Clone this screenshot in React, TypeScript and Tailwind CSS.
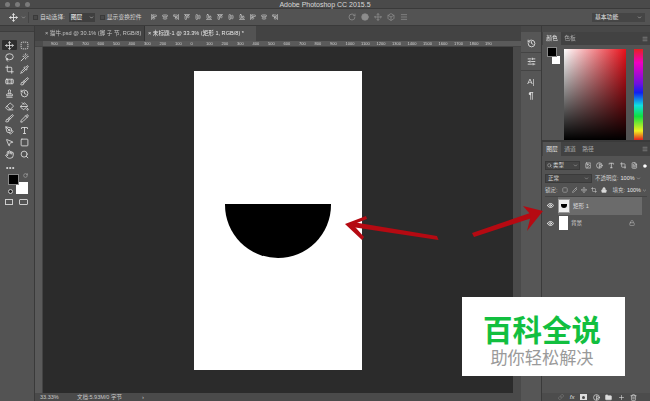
import {
  AlignCenterHorizontal,
  AlignCenterVertical,
  AlignEndHorizontal,
  AlignEndVertical,
  AlignStartHorizontal,
  AlignStartVertical,
  Box,
  Brush,
  ChevronDown,
  Crop,
  Eraser,
  Eye,
  FileText,
  Folder,
  Hand,
  History,
  Image as ImageIcon,
  Link,
  Lasso,
  Lock,
  Menu,
  Move,
  PaintBucket,
  PenTool,
  Pencil,
  Pipette,
  RotateCw,
  Search,
  Square,
  SquareDashed,
  Stamp,
  Trash2,
  Type,
  Wand,
  Bandage,
  MousePointer2,
  SlidersHorizontal,
  Circle,
  Contrast,
  Plus,
} from 'lucide-react';

const font = 'font-["Liberation_Sans","Noto_Sans_CJK_SC",sans-serif]';

const tools = [
  [Move, SquareDashed],
  [Lasso, Wand],
  [Crop, Pipette],
  [Bandage, Brush],
  [Stamp, History],
  [Eraser, PaintBucket],
  [Brush, Pencil],
  [PenTool, Type],
  [MousePointer2, Square],
  [Hand, Search],
];

const aligns = [
  AlignStartVertical,
  AlignCenterVertical,
  AlignEndVertical,
  AlignStartHorizontal,
  AlignCenterHorizontal,
  AlignEndHorizontal,
  AlignStartHorizontal,
  AlignCenterHorizontal,
  AlignEndHorizontal,
  AlignStartVertical,
  AlignCenterVertical,
  AlignEndVertical,
];

const rulerMarks = ['900', '800', '700', '600', '500', '400', '300', '200', '100', '0', '100', '200', '300', '400', '500', '600', '700', '800', '900', '1000', '1100', '1200', '1300', '1400', '1500', '1600', '1700', '1800', '190'];

function ToolBar() {
  return (
    <div className="w-[35px] shrink-0 bg-[#535353] border-r border-[#3a3a3a] flex flex-col">
      <div className="h-[6px] bg-[#484848] border-b border-[#3d3d3d]" />
      <div className="h-[8px]" />
      <div className="flex flex-col gap-[2px] px-[2px]">
        {tools.map((row, i) => (
          <div key={i} className="flex h-[10.2px] gap-[1px]">
            {row.map((Icon, j) => (
              <div
                key={j}
                className={`w-[15px] flex items-center justify-center ${i === 0 && j === 0 ? 'bg-[#2e2e2e] rounded-[1px]' : ''}`}
              >
                <Icon size={9} strokeWidth={2.2} className="text-[#e2e2e2]" />
              </div>
            ))}
          </div>
        ))}
      </div>
      <div className="mt-[5px] ml-[6px] text-[#d5d5d5] text-[7px] leading-[6px] font-bold tracking-[0.5px]">•••</div>
      <div className="relative mt-[3px] ml-[8px] w-[20px] h-[20px]">
        <div className="absolute right-0 bottom-0 w-[12px] h-[12px] bg-white" />
        <div className="absolute left-0 top-0 w-[11px] h-[11px] bg-black border border-[#888]" />
        <RotateCw size={5} className="absolute right-0 -top-[1px] text-[#ccc]" />
        <div className="absolute left-0 bottom-0 w-[5px] h-[5px] bg-[#222] border border-[#ccc] rounded-full" />
      </div>
      <div className="mt-[5px] ml-[5px] flex gap-[6px]">
        <div className="w-[8px] h-[6px] border border-[#ccc]" />
        <div className="w-[9px] h-[6px] border border-[#ccc] rounded-[1px]" />
      </div>
    </div>
  );
}

function Tabs() {
  return (
    <div className="h-[15px] flex bg-[#434343] text-[5.6px] leading-[15px] whitespace-nowrap">
      <div className="w-[110px] pl-[10px] text-[#c4c4c4] border-r border-[#333]">× 猫牛.psd @ 30.1% (脚 子 节, RGB/8)</div>
      <div className="w-[111px] pl-[3px] bg-[#535353] text-[#e8e8e8]">× 未标题-1 @ 33.3% (矩形 1, RGB/8) *</div>
    </div>
  );
}

function Ruler() {
  return (
    <div className="h-[6px] flex bg-[#5a5a5a] border-b border-[#444]">
      <div className="w-[8px] shrink-0 bg-[#4c4c4c]" />
      <div className="flex-1 flex overflow-hidden pl-[8px] text-[4px] leading-[6px] text-[#d0d0d0]">
        {rulerMarks.map((m, i) => (
          <span key={i} className="w-[15.5px] shrink-0">{m}</span>
        ))}
      </div>
    </div>
  );
}

function Canvas() {
  return (
    <div className="flex-1 flex min-h-0">
      <div className="w-[8px] shrink-0 bg-[#5a5a5a] border-r border-[#444]" />
      <div className="flex-1 bg-[#2b2b2b] pl-[151px] pt-[24px]">
        <div className="w-[168px] h-[299px] bg-white pl-[31px] pt-[133px]">
          <div className="w-[106px] h-[54px] bg-black rounded-b-[53px]" />
        </div>
      </div>
      <div className="w-[8px] shrink-0 bg-[#4a4a4a]" />
    </div>
  );
}

function StatusBar() {
  return (
    <div className="h-[8px] flex items-center bg-[#4a4a4a] text-[#c8c8c8] text-[5.5px] leading-[8px] whitespace-nowrap">
      <span className="w-[42px] pl-[5px]">33.33%</span>
      <span className="w-[65px]">文档:5.93M/0 字节</span>
      <span className="text-[6px]">›</span>
    </div>
  );
}

function Dock() {
  return (
    <div className="w-[20px] shrink-0 bg-[#565656] flex flex-col items-center text-[#dcdcdc]">
      <div className="h-[6px] w-full bg-[#484848]" />
      <div className="mt-[6px] h-[11px] flex items-center">
        <History size={9} strokeWidth={2.4} />
      </div>
      <div className="mt-[3px] w-full border-t border-[#444]" />
      <div className="mt-[3px] h-[11px] flex items-center">
        <SlidersHorizontal size={9} strokeWidth={2.4} />
      </div>
      <div className="mt-[3px] w-full border-t border-[#444]" />
      <div className="mt-[6px] h-[10px] text-[8px] leading-[10px]">A|</div>
      <div className="mt-[3px] h-[10px] text-[9px] leading-[10px] font-bold">¶</div>
    </div>
  );
}

function ColorPanel() {
  return (
    <div className="h-[116px] shrink-0 border-b-[2px] border-[#3a3a3a] bg-[#535353]">
      <div className="h-[6px] bg-[#484848]" />
      <div className="h-[13px] flex bg-[#424242] text-[5.8px] leading-[13px]">
        <div className="w-[18px] ml-[1px] text-center bg-[#535353] text-[#e4e4e4]">颜色</div>
        <div className="w-[18px] text-center text-[#aaa]">色板</div>
        <div className="flex-1 flex justify-end items-center pr-[2px] text-[#aaa]"><Menu size={6} /></div>
      </div>
      <div className="flex pt-[4px] pl-[5px] h-[95px]">
        <div className="relative w-[17px] h-[17px] shrink-0 mt-[-2px]">
          <div className="absolute right-[4px] bottom-0 w-[8px] h-[8px] bg-white" />
          <div className="absolute left-0 top-0 w-[10px] h-[10px] bg-black border border-[#888]" />
        </div>
        <div className="w-[62px] h-[91px] bg-[linear-gradient(to_top,#000,transparent),linear-gradient(to_right,#fff,#e8101a)]" />
        <div className="w-[9px] h-[91px] ml-[8px] bg-[linear-gradient(to_bottom,#e42020_0%,#f000c0_15%,#7010e0_38%,#1020f0_48%,#10e0e0_62%,#10e040_74%,#f0f020_90%,#e42020_100%)]" />
      </div>
    </div>
  );
}

function LayerRow({ name, selected, lock, thumb }: { name: string; selected?: boolean; lock?: boolean; thumb: React.ReactNode }) {
  return (
    <div className="h-[17.5px] flex items-center text-[#d8d8d8] text-[5.6px]">
      <div className="w-[16px] flex justify-center"><Eye size={7} strokeWidth={2.6} className="text-white" /></div>
      <div className={`flex-1 h-full flex items-center ${selected ? 'bg-[#6b6b6b]' : ''}`}>
        {thumb}
        <span className="ml-[3px]">{name}</span>
        {lock && <Lock size={6} className="ml-auto mr-[7px] text-[#bbb]" />}
      </div>
    </div>
  );
}

function LayersPanel() {
  return (
    <div className="flex-1 flex flex-col min-h-0 bg-[#535353]">
      <div className="h-[14px] flex bg-[#424242] text-[5.8px] leading-[14px]">
        <div className="w-[18px] ml-[1px] text-center bg-[#535353] text-[#e4e4e4]">图层</div>
        <div className="w-[18px] text-center text-[#aaa]">通道</div>
        <div className="w-[18px] text-center text-[#aaa]">路径</div>
        <div className="flex-1 flex justify-end items-center pr-[2px] text-[#aaa]"><Menu size={6} /></div>
      </div>
      <div className="h-[13px] mt-[3px] flex items-center mx-[3px] gap-[5px] text-[#d5d5d5] text-[5.5px]">
        <div className="w-[36px] h-[9px] bg-[#454545] border border-[#3a3a3a] flex items-center px-[1px] gap-[1px]">
          <Search size={5} />
          <span>类型</span>
          <ChevronDown size={5} className="ml-auto" />
        </div>
        <ImageIcon size={7} strokeWidth={2.4} />
        <Contrast size={7} strokeWidth={2.4} />
        <Type size={7} strokeWidth={2.6} />
        <Crop size={7} strokeWidth={2.4} />
        <FileText size={7} strokeWidth={2.4} />
        <Circle size={4} fill="#fff" className="text-white" />
      </div>
      <div className="h-[12px] flex items-center mx-[3px] text-[#cfcfcf] text-[5.5px] whitespace-nowrap">
        <div className="w-[47px] h-[9px] bg-[#454545] border border-[#3a3a3a] flex items-center px-[2px]">
          <span>正常</span>
          <ChevronDown size={5} className="ml-auto" />
        </div>
        <span className="ml-[3px]">不透明度:</span>
        <span className="ml-[2px] text-[#e8e8e8]">100%</span>
        <ChevronDown size={5} className="ml-[1px]" />
      </div>
      <div className="h-[13px] flex items-center mx-[3px] gap-[4px] text-[#cfcfcf] text-[5.5px] whitespace-nowrap border-b border-[#444]">
        <span>锁定:</span>
        <SquareDashed size={6} />
        <Pencil size={6} />
        <Move size={6} />
        <Crop size={6} />
        <Lock size={6} fill="#ddd" />
        <span className="ml-[1px]">填充:</span>
        <span className="ml-[-2px] text-[#e8e8e8]">100%</span>
        <ChevronDown size={5} className="ml-[-3px]" />
      </div>
      <div className="flex-1 min-h-0 pr-[8px]">
        <LayerRow
          name="矩形 1"
          selected
          thumb={
            <div className="w-[12px] h-[14px] bg-[#eee] border border-[#999] flex items-center justify-center">
              <div className="w-[6px] h-[4px] bg-black rounded-b-[3px]" />
            </div>
          }
        />
        <LayerRow name="背景" lock thumb={<div className="w-[9px] h-[14px] ml-[1px] bg-white" />} />
      </div>
      <div className="h-[8px] flex items-center justify-end pr-[13px] gap-[5.5px] bg-[#4c4c4c] text-[#dedede]">
        <Link size={6} className="text-[#888]" />
        <span className="text-[6px] leading-[8px] italic">fx</span>
        <div className="w-[7px] h-[6px] bg-[#ddd] flex items-center justify-center">
          <div className="w-[3px] h-[3px] rounded-full bg-[#4c4c4c]" />
        </div>
        <Contrast size={7} strokeWidth={2.4} />
        <Folder size={7} fill="#ddd" />
        <Plus size={7} />
        <Trash2 size={7} />
      </div>
    </div>
  );
}

export default function App() {
  return (
    <div className={`${font} relative w-[650px] h-[401px] overflow-hidden bg-[#535353] flex flex-col`}>
      <div className="flex flex-col flex-1 min-h-0 blur-[0.5px]">
        <div className="h-[9px] shrink-0 bg-[#4a4a4a] border-b border-[#3a3a3a] flex items-center relative">
          <div className="flex gap-[5px] pl-[5px]">
            <div className="w-[5px] h-[5px] rounded-full bg-[#7a7a7a]" />
            <div className="w-[5px] h-[5px] rounded-full bg-[#7a7a7a]" />
            <div className="w-[5px] h-[5px] rounded-full bg-[#7a7a7a]" />
          </div>
          <div className="flex-1 text-center text-[7px] leading-[9px] pr-[30px] text-[#d8d8d8]">Adobe Photoshop CC 2015.5</div>
        </div>
        <div className="h-[17px] shrink-0 bg-[#535353] border-b border-[#3a3a3a] flex items-center text-[#d5d5d5] text-[5.8px] whitespace-nowrap">
          <Move size={9} strokeWidth={2.4} className="ml-[9px] text-[#e6e6e6]" />
          <ChevronDown size={5} className="ml-[3px]" />
          <div className="ml-[2px] h-[11px] border-l border-[#444]" />
          <div className="ml-[4px] w-[5px] h-[5px] bg-[#484848] border border-[#3a3a3a]" />
          <span className="ml-[2px]">自动选择:</span>
          <div className="ml-[4px] w-[26px] h-[9px] bg-[#3f3f3f] flex items-center pl-[2px] text-white">
            <span>图层</span>
            <ChevronDown size={5} className="ml-auto mr-[1px]" />
          </div>
          <div className="ml-[5px] w-[5px] h-[5px] bg-[#484848] border border-[#3a3a3a]" />
          <span className="ml-[2px]">显示变换控件</span>
          <div className="ml-[9px] flex gap-[5px] text-[#cfcfcf]">
            {aligns.map((Icon, i) => (
              <Icon key={i} size={6} strokeWidth={2.4} />
            ))}
          </div>
          <div className="ml-[70px] flex gap-[5px] text-[#8c8c8c]">
            <RotateCw size={8} strokeWidth={2.4} />
            <Circle size={8} fill="#8c8c8c" />
            <Move size={8} strokeWidth={2.4} />
            <Box size={8} strokeWidth={2.4} />
            <Menu size={8} strokeWidth={2.4} />
          </div>
          <div className="ml-auto mr-[5px] w-[53px] h-[9px] bg-[#454545] flex items-center px-[3px] text-[#e8e8e8]">
            <span>基本功能</span>
            <ChevronDown size={5} className="ml-auto" />
          </div>
        </div>
        <div className="flex-1 flex min-h-0">
          <ToolBar />
          <div className="flex-1 min-w-0 flex flex-col">
            <Tabs />
            <Ruler />
            <Canvas />
            <StatusBar />
          </div>
          <Dock />
          <div className="w-[109px] shrink-0 border-l border-[#3a3a3a] flex flex-col">
            <ColorPanel />
            <LayersPanel />
          </div>
        </div>
      </div>

      <svg className="absolute inset-0 blur-[0.4px]" width="650" height="401" viewBox="0 0 650 401" fill="none">
        <g fill="#b50a12">
          <path d="M437 236 L438.5 240 L352 227 L352.5 222 Z" />
          <path d="M345 224 L366 216 L367 219 L353 224.5 L364 237 L362 240 Z" />
          <path d="M472 233 L533 212 L535 217 L474 237 Z" />
          <path d="M543 211 L523 206 L531 215 L527 231 Z" />
        </g>
      </svg>

      <div className="absolute left-[462px] top-[297px] w-[163px] h-[79px] bg-white flex flex-col items-center pt-[14px]">
        <div className="text-[29.5px] leading-[34px] font-bold text-[#12bf3f] font-['Noto_Sans_CJK_SC',sans-serif] mr-[3px]">百科全说</div>
        <div className="text-[17.2px] leading-[22px] mt-[1px] text-[#9a9a9a] font-['Noto_Sans_CJK_SC',sans-serif] mr-[3px]">助你轻松解决</div>
      </div>
    </div>
  );
}
